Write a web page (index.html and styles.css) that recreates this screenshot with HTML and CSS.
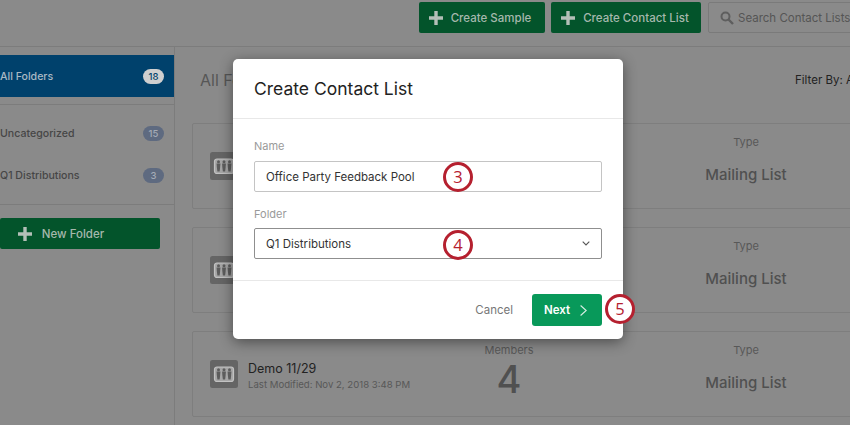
FILE: index.html
```html
<!DOCTYPE html>
<html lang="en">
<head>
<meta charset="utf-8">
<title>Create Contact List</title>
<link rel="stylesheet" href="styles.css">
</head>
<body>
<svg class="defs" width="0" height="0" aria-hidden="true">
  <symbol id="plus" viewBox="0 0 14 14"><path d="M7 0v14M0 7h14" stroke="currentColor" stroke-width="3.4" fill="none"/></symbol>
  <symbol id="list-icon" viewBox="0 0 28 28">
    <rect width="28" height="28" rx="2.5" fill="#656565"/>
    <rect x="4.5" y="7" width="19" height="14.5" rx="2.5" fill="#a6a6a6" stroke="#c2c2c2" stroke-width="1.2"/>
    <g fill="#5c5c5c">
      <circle cx="8.5" cy="9.8" r="1.5"/><path d="M6.6 11.4h3.8l-.3 4.4-.5 3.6H7.4l-.5-3.6z"/>
      <circle cx="14" cy="9.8" r="1.5"/><path d="M12.1 11.4h3.8l-.3 4.4-.5 3.6h-2.2l-.5-3.6z"/>
      <circle cx="19.5" cy="9.8" r="1.5"/><path d="M17.6 11.4h3.8l-.3 4.4-.5 3.6h-2.2l-.5-3.6z"/>
    </g>
  </symbol>
</svg>

<div class="page">
  <header class="toolbar">
    <button class="btn"><svg class="plus"><use href="#plus"/></svg>Create Sample</button>
    <button class="btn btn-wide"><svg class="plus"><use href="#plus"/></svg>Create Contact List</button>
    <div class="search">
      <svg class="search-icon" viewBox="0 0 14 14"><circle cx="5.5" cy="5.5" r="4" fill="none" stroke="currentColor" stroke-width="2"/><path d="M8.5 8.5l4.5 4.5" stroke="currentColor" stroke-width="2.4"/></svg>
      <span>Search Contact Lists</span>
    </div>
  </header>

  <div class="body">
    <aside class="sidebar">
      <div class="folder folder-active"><span>All Folders</span><span class="badge badge-light">18</span></div>
      <div class="folder-group">
        <div class="folder"><span>Uncategorized</span><span class="badge">15</span></div>
        <div class="folder"><span>Q1 Distributions</span><span class="badge">3</span></div>
      </div>
      <div class="sidebar-foot">
        <button class="btn btn-folder"><svg class="plus"><use href="#plus"/></svg>New Folder</button>
      </div>
    </aside>

    <main class="content">
      <div class="content-head">
        <h2>All Folders</h2>
        <span class="filter">Filter By: All</span>
      </div>
      <article class="card">
        <svg class="list-icon"><use href="#list-icon"/></svg>
        <div class="card-name"></div>
        <div class="card-col"></div>
        <div class="card-col"><span class="col-label">Type</span><span class="col-type">Mailing List</span></div>
      </article>
      <article class="card">
        <svg class="list-icon"><use href="#list-icon"/></svg>
        <div class="card-name"></div>
        <div class="card-col"></div>
        <div class="card-col"><span class="col-label">Type</span><span class="col-type">Mailing List</span></div>
      </article>
      <article class="card">
        <svg class="list-icon"><use href="#list-icon"/></svg>
        <div class="card-name">
          <div class="name">Demo 11/29</div>
          <div class="modified">Last Modified: Nov 2, 2018 3:48 PM</div>
        </div>
        <div class="card-col"><span class="col-label">Members</span><span class="col-count">4</span></div>
        <div class="card-col"><span class="col-label">Type</span><span class="col-type">Mailing List</span></div>
      </article>
    </main>
  </div>

  <section class="modal">
    <h1 class="modal-title">Create Contact List</h1>
    <div class="modal-body">
      <div class="field-label">Name</div>
      <div class="input">Office Party Feedback Pool</div>
      <div class="field-label field-label-next">Folder</div>
      <div class="input">
        <span>Q1 Distributions</span>
        <svg class="chevron" viewBox="0 0 8 5"><path d="M.7.7L4 4l3.3-3.3" fill="none" stroke="#555" stroke-width="1.1"/></svg>
      </div>
    </div>
    <div class="modal-foot">
      <span class="cancel">Cancel</span>
      <button class="next">Next<svg class="next-arrow" viewBox="0 0 7 11"><path d="M.6.5l5.6 5-5.6 5" fill="none" stroke="currentColor" stroke-width="1.1"/></svg></button>
    </div>
  </section>

  <div class="step step-3">3</div>
  <div class="step step-4">4</div>
  <div class="step step-5">5</div>
</div>
</body>
</html>
```
FILE: styles.css
```css
* { box-sizing: border-box; }
html, body { margin: 0; height: 100%; overflow: hidden; }
body { font-family: "Inter", "Liberation Sans", sans-serif; background: #8a8a8a; }
.defs { position: absolute; }
.page { position: relative; width: 850px; height: 425px; overflow: hidden; background: #8a8a8a; }

.toolbar {
  display: flex; gap: 6px; height: 47px; padding: 2px 0 0 419px;
  border-bottom: 1px solid #7c7c7c;
}
.btn {
  display: flex; flex: none; align-items: center; justify-content: center; gap: 8px;
  height: 31px; width: 126px; padding: 0 4px 0 0; border: 0; border-radius: 2px;
  background: #03542b; color: #a6b8ad; font: 500 11.5px "Inter", sans-serif;
}
.btn-wide { width: 150px; padding-right: 2px; }
.plus { width: 14px; height: 14px; color: #b4bfb8; }
.search {
  display: flex; align-items: center; gap: 4px; width: 160px; height: 31px;
  margin-left: 1px; padding-left: 11px; flex: none;
  border: 1px solid #7a7a7a; border-radius: 2px; color: #555; font-size: 11.5px; white-space: nowrap;
}
.search-icon { width: 14px; height: 14px; color: #5e5e5e; }

.body { display: flex; height: 378px; }
.sidebar { width: 175px; flex: none; padding-top: 8px; border-right: 1px solid #7c7c7c; }
.folder {
  display: flex; align-items: center; justify-content: space-between;
  height: 41.5px; padding-right: 10px; color: #464646; font-size: 10.6px; font-weight: 500; white-space: nowrap;
}
.folder-active { height: 42px; padding-top: 1px; background: #00416c; color: #a9b9c4; }
.folder-group { margin-top: 7px; padding-top: 8px; padding-bottom: 8px; border-top: 1px solid #7c7c7c; border-bottom: 1px solid #7c7c7c; }
.badge {
  display: flex; align-items: center; justify-content: center;
  width: 21px; height: 15px; border-radius: 8px; background: #5e6a80; color: #a4abb6; font-size: 9.5px;
}
.badge-light { background: #cfcfcf; color: #00416c; }
.sidebar-foot { padding-top: 13px; }
.btn-folder { width: 160px; gap: 10px; padding-right: 38px; }

.content { flex: 1; padding: 0 0 0 17px; min-width: 0; }
.content-head { display: flex; justify-content: space-between; align-items: center; height: 76px; padding-left: 8px; padding-bottom: 10px; }
.content-head h2 { margin: 0; font-size: 16px; font-weight: 400; color: #565656; }
.filter { color: #222; font-size: 11.5px; white-space: nowrap; width: 55px; overflow: hidden; }

.card {
  display: grid; grid-template-columns: 28px 201px 100px 354px;
  column-gap: 10px; align-items: start;
  width: 760px; height: 86px; margin-bottom: 18px; padding: 28px 0 0 17px;
  border: 1px solid #7e7e7e; border-radius: 2px;
}
.list-icon { width: 28px; height: 28px; }
.name { color: #222; font-size: 12.5px; line-height: 17px; }
.modified { margin-top: 1px; color: #585858; font-size: 9.6px; line-height: 14px; white-space: nowrap; }
.card-col { display: flex; flex-direction: column; align-items: center; margin-top: -18px; }
.col-label { color: #585858; font-size: 11px; line-height: 16px; }
.col-type { margin-top: 15px; color: #505050; font-size: 15px; font-weight: 500; line-height: 20px; }
.col-count { margin-top: 1px; color: #505050; font-size: 38px; font-weight: 500; line-height: 40px; }

.modal {
  position: absolute; left: 233px; top: 59px; width: 390px; height: 280px;
  background: #fff; border-radius: 5px; box-shadow: 0 3px 14px rgba(0, 0, 0, .45);
  display: flex; flex-direction: column;
}
.modal-title { margin: 0; height: 59px; padding: 18px 0 0 21px; font-size: 17.5px; font-weight: 400; line-height: 24px; color: #222; }
.modal-body { flex: 1; padding: 19px 21px 0; border-top: 1px solid #e8e8e8; border-bottom: 1px solid #e8e8e8; }
.field-label { height: 16px; margin-bottom: 7px; color: #9a9a9a; font-size: 11px; line-height: 16px; }
.field-label-next { margin-top: 14px; margin-bottom: 6px; }
.input {
  display: flex; align-items: center; justify-content: space-between;
  height: 31px; padding: 0 12px 0 11px; border: 1px solid #c4c4c4; border-radius: 2px;
  color: #333; font-size: 11.5px;
}
.input + .field-label + .input { border-color: #8f8f8f; }
.chevron { width: 8px; height: 5px; margin-right: -1px; }
.modal-foot { display: flex; align-items: center; justify-content: flex-end; gap: 19px; height: 58px; padding-right: 21px; }
.cancel { color: #777; font-size: 11.5px; }
.next {
  display: flex; align-items: center; justify-content: flex-start; gap: 10px;
  width: 70px; height: 32px; padding: 0 0 0 12px; border: 0; border-radius: 3px;
  background: #08995a; color: #fff; font: 600 11.5px "Inter", sans-serif;
}
.next-arrow { width: 7px; height: 11px; color: #d9efe4; }

.step {
  position: absolute; width: 30px; height: 30px; border: 3px solid #b5202f; border-radius: 50%;
  background: #fff; color: #b5202f; font: 400 16.5px/24px "Open Sans", sans-serif; text-align: center;
}
.step-3 { left: 443px; top: 162px; }
.step-4 { left: 443px; top: 230px; }
.step-5 { left: 605px; top: 294px; }
```
